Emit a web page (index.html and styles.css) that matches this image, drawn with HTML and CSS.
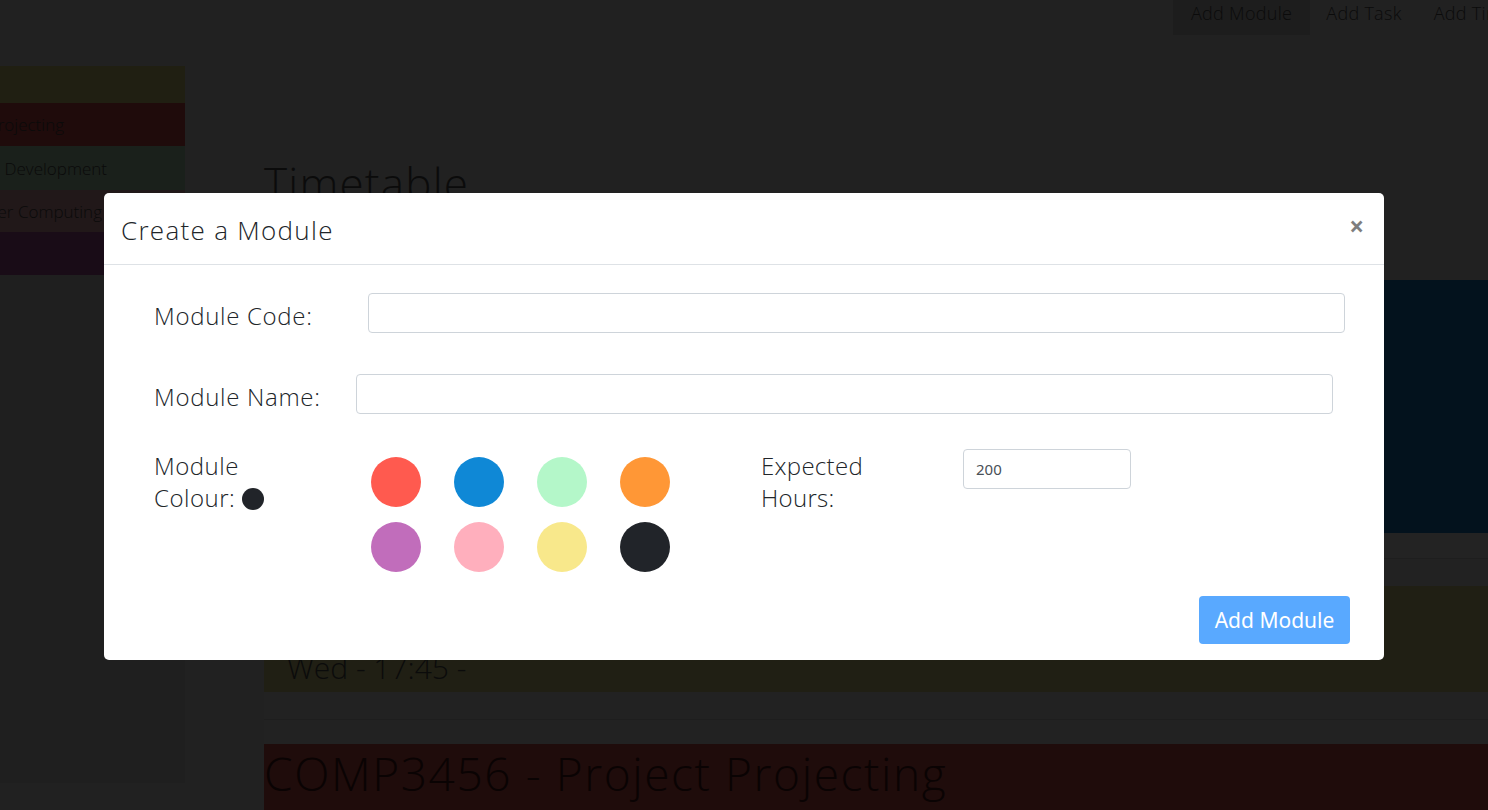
FILE: index.html
```html
<!DOCTYPE html>
<html lang="en">
<head>
<meta charset="utf-8">
<title>Timetable - Create a Module</title>
<link rel="stylesheet" href="styles.css">
</head>
<body>
<div class="page">
  <header class="topbar">
    <nav class="topnav">
      <a class="nav-item active">Add Module</a>
      <a class="nav-item">Add Task</a>
      <a class="nav-item">Add Timetable</a>
    </nav>
  </header>
  <div class="layout">
    <aside class="sidebar">
      <div class="side-item side-olive"></div>
      <div class="side-item side-red"><span class="side-text end-1">COMP3456 - Project Projecting</span></div>
      <div class="side-item side-green"><span class="side-text end-2">COMP2345 - Web Development</span></div>
      <div class="side-item side-rose"><span class="side-text end-3">COMP1234 - Computer Computing</span></div>
      <div class="side-item side-purple"></div>
    </aside>
    <main class="main">
      <h1 class="page-title">Timetable</h1>
      <section class="block block-blue"></section>
      <div class="stripe stripe-a"></div>
      <div class="stripe stripe-b"></div>
      <section class="block block-olive">
        <p class="slot-title">COMP2345 - Web Development</p>
        <p class="slot-time">Wed - 17:45 -</p>
      </section>
      <div class="stripe stripe-b"></div>
      <div class="stripe stripe-c"></div>
      <section class="block block-red">
        <h2 class="module-title">COMP3456 - Project Projecting</h2>
        <p class="module-sub">Monday 09:00 - 11:00</p>
      </section>
    </main>
  </div>
</div>

<div class="modal" role="dialog" aria-labelledby="modalTitle">
  <div class="modal-header">
    <h5 class="modal-title" id="modalTitle">Create a Module</h5>
    <button class="close" type="button" aria-label="Close">&times;</button>
  </div>
  <div class="modal-body">
    <div class="field">
      <label class="field-label label-code">Module Code:</label>
      <input class="text-input wide" type="text">
    </div>
    <div class="field field-name">
      <label class="field-label label-name">Module Name:</label>
      <input class="text-input wide" type="text">
    </div>
    <div class="colour-row">
      <div class="colour-label">Module<br>Colour: <span class="dot"></span></div>
      <div class="swatches">
        <span class="swatch sw-red"></span>
        <span class="swatch sw-blue"></span>
        <span class="swatch sw-mint"></span>
        <span class="swatch sw-orange"></span>
        <span class="swatch sw-purple"></span>
        <span class="swatch sw-pink"></span>
        <span class="swatch sw-yellow"></span>
        <span class="swatch sw-black"></span>
      </div>
      <div class="hours-label">Expected<br>Hours:</div>
      <input class="text-input hours" type="text" value="200">
    </div>
  </div>
  <div class="modal-footer">
    <button class="btn-primary" type="button" disabled>Add Module</button>
  </div>
</div>
</body>
</html>
```

FILE: styles.css
```css
html, body {
  margin: 0;
  padding: 0;
  height: 100%;
  overflow: hidden;
}
body {
  background: #212121;
  font-family: "Open Sans", "Liberation Sans", sans-serif;
  font-weight: 300;
  color: #0b0b0b;
}
.page {
  width: 1570px;
}
.topbar {
  height: 66px;
}
.topnav {
  display: flex;
  justify-content: flex-end;
}
.nav-item {
  display: block;
  height: 35px;
  line-height: 26px;
  padding: 0 16px;
  font-size: 18px;
  letter-spacing: 0.3px;
  color: #0b0b0b;
}
.nav-item.active {
  background: #1d1d1d;
  padding: 0 18px;
}
.layout {
  display: flex;
  align-items: flex-start;
}
.sidebar {
  width: 185px;
  flex-shrink: 0;
  height: 717px;
  background: #1f1f1f;
  overflow: hidden;
}
.side-item {
  height: 43px;
  display: flex;
  align-items: center;
  font-size: 17px;
  color: #0a0a0a;
  white-space: nowrap;
}
.side-olive { height: 37px; background: #201f12; }
.side-red { background: #1f0b0b; }
.side-green { height: 44px; background: #1a201b; }
.side-rose { height: 42px; background: #211819; }
.side-purple { background: #190c17; }
.side-text {
  flex-shrink: 0;
  width: 400px;
  text-align: right;
}
.end-1 { margin-left: -336px; }
.end-2 { margin-left: -293px; }
.end-3 { margin-left: -298px; }

.main {
  flex: 1;
  margin-left: 79px;
}
.page-title {
  margin: 91px 0 70px;
  font-size: 44px;
  line-height: 53px;
  font-weight: 300;
  letter-spacing: 1.2px;
  color: #0b0b0b;
}
.block-blue {
  height: 253px;
  background: #03121d;
}
.stripe { height: 26px; }
.stripe-a { background: #232323; border-bottom: 1px solid #1e1e1e; height: 25px; }
.stripe-b { background: #222222; height: 27px; }
.stripe-c { background: #222222; border-top: 1px solid #1e1e1e; height: 24px; }
.block-olive {
  height: 106px;
  background: #201f14;
  padding: 0 23px;
  box-sizing: border-box;
  overflow: hidden;
}
.slot-title {
  margin: 12px 0 0;
  font-size: 30px;
  line-height: 40px;
}
.slot-time {
  margin: 10px 0 0;
  font-size: 30px;
  line-height: 40px;
}
.block-red {
  height: 200px;
  background: #1f0c0b;
  color: #0a0303;
}
.module-title {
  margin: 0;
  font-size: 46px;
  line-height: 58px;
  font-weight: 300;
  letter-spacing: 1.6px;
}
.module-sub {
  margin: 4px 0 0 100px;
  font-size: 24px;
  line-height: 32px;
}

/* modal */
.modal {
  position: fixed;
  top: 193px;
  left: 104px;
  width: 1280px;
  background: #ffffff;
  border-radius: 5px;
  color: #212529;
}
.modal-header {
  height: 71px;
  border-bottom: 1px solid #dee2e6;
  display: flex;
  align-items: center;
  justify-content: space-between;
  padding: 0 20px 0 17px;
}
.modal-title {
  margin: 2px 0 0;
  font-size: 26px;
  font-weight: 300;
  letter-spacing: 1.3px;
  color: #212529;
}
.close {
  border: 0;
  background: transparent;
  padding: 0;
  margin-top: -6px;
  font-family: "Open Sans", sans-serif;
  font-size: 26px;
  font-weight: 700;
  line-height: 1;
  color: #000;
  opacity: 0.5;
}
.modal-body {
  padding: 28px 0 0 50px;
}
.field {
  display: flex;
  align-items: center;
  height: 40px;
}
.field-name {
  margin-top: 41px;
}
.field-label {
  flex-shrink: 0;
  font-size: 24px;
  letter-spacing: 0.7px;
  padding-top: 5px;
}
.label-code { width: 214px; }
.label-name { width: 202px; }
.text-input {
  box-sizing: border-box;
  height: 40px;
  border: 1px solid #ced4da;
  border-radius: 4px;
  padding: 0 12px;
  font-family: "Noto Sans", "Open Sans", sans-serif;
  font-size: 15px;
  color: #495057;
  background: #fff;
}
.wide { width: 977px; }
.colour-row {
  display: flex;
  align-items: flex-start;
  margin-top: 36px;
}
.colour-label {
  width: 217px;
  flex-shrink: 0;
  font-size: 24px;
  line-height: 32px;
  letter-spacing: 0.5px;
}
.dot {
  display: inline-block;
  width: 22px;
  height: 22px;
  border-radius: 50%;
  background: #212429;
  vertical-align: -3px;
}
.swatches {
  display: grid;
  grid-template-columns: repeat(4, 50px);
  column-gap: 33px;
  row-gap: 15px;
  margin-top: 7px;
}
.swatch {
  width: 50px;
  height: 50px;
  border-radius: 50%;
}
.sw-red { background: #ff5a4f; }
.sw-blue { background: #0f88d6; }
.sw-mint { background: #b4f7c9; }
.sw-orange { background: #ff9736; }
.sw-purple { background: #c16dbb; }
.sw-pink { background: #ffafbd; }
.sw-yellow { background: #f8e88b; }
.sw-black { background: #212429; }
.hours-label {
  margin-left: 91px;
  width: 202px;
  flex-shrink: 0;
  font-size: 24px;
  line-height: 32px;
  letter-spacing: 0.3px;
}
.hours {
  width: 168px;
  margin-top: -1px;
}
.modal-footer {
  display: flex;
  justify-content: flex-end;
  padding: 24px 34px 16px;
}
.btn-primary {
  width: 151px;
  height: 48px;
  border: 0;
  border-radius: 4px;
  background: #59a9ff;
  color: #ffffff;
  font-family: "Noto Sans", "Open Sans", sans-serif;
  font-size: 21px;
  font-weight: 400;
  padding: 0;
}
```
